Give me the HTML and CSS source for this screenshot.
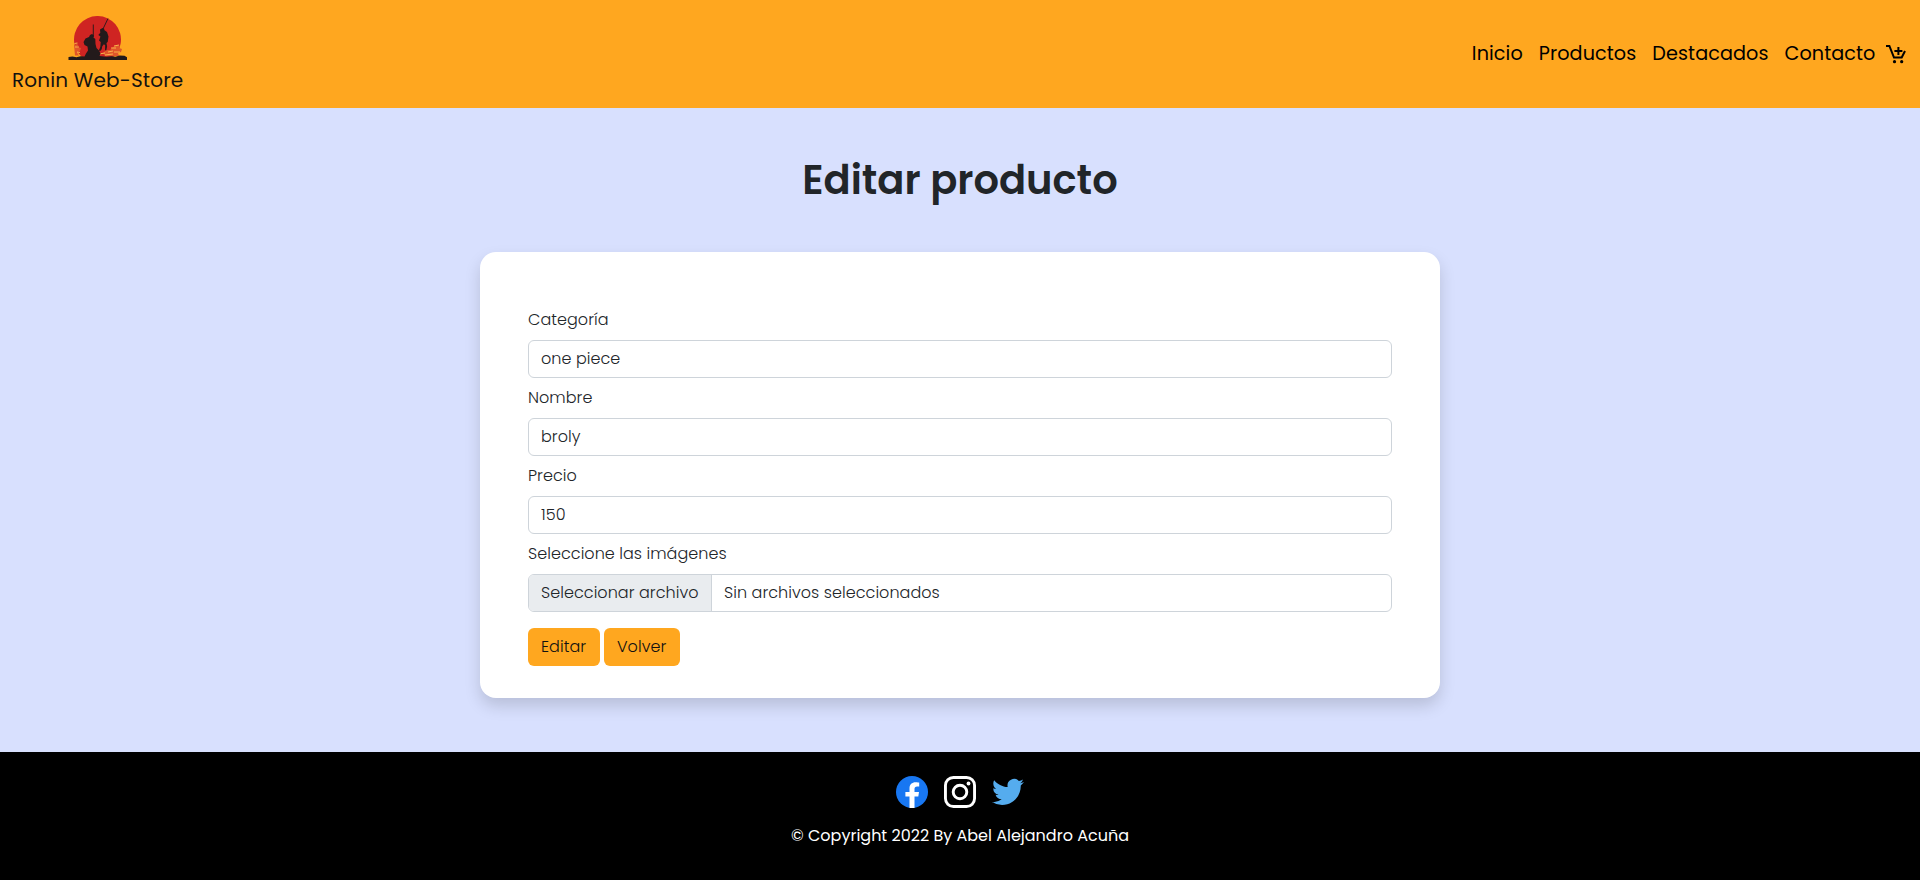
FILE: index.html
```html
<!DOCTYPE html>
<html lang="es">
<head>
<meta charset="utf-8">
<title>Editar producto</title>
<link rel="stylesheet" href="styles.css">
</head>
<body>
<header class="navbar">
  <a class="brand">
    <svg class="brand-logo" width="60" height="46" viewBox="0 0 60 46">
      <path d="M17.500 43.700A23.500 23.500 0 1 1 41.500 43.700z" fill="#cf2422"/>
      <path d="M6 29l3-1 1.500 1.500L9 31l4 1-1 3-3 1.500 2 3H7zM42 34l3-3 4-2 3 1-1 2 3 1-1 3-3 1 1 3H37l-2-3 3-3z" fill="#e0562a"/>
      <path d="M6.500 27.500l3-.5M7 31h4M9 36l3 .5M43 32h5M46 30l5-1M40 36l5-1M46 36h6M31 38l6-1M37 39l8-1" stroke="#f9b04a" stroke-width="1.100" fill="none"/>
      <path d="M.5 41l4-.5 4 .8 4-1 4 .2 1.500-3 2-3-.5-4-3-1.500-1-3 2-3.500 3.500-1.500 1-2 2-1 1.800 1.200-.3 2.300 1.800 1.500.2 5 1 4 2.500 2.500 1.500 3-1 2.500 7 .8 5-.6 4 .5 4-1.200 5 .3 2.500 1.500V44H.5z" fill="#231a1b"/>
      <path d="M25.300 8.500V21M40 2.500L34.500 14" stroke="#231a1b" stroke-width=".9"/>
      <path d="M32 13.500l2.500-1.500 1.500.5.500 1.800 2.500 1.700 1.500 4.500-.8 5.500-1.200 1 .6 3.500-.8 4-1.300-.2.200-5-1.300-1-1.600 2-.6 3-1.500 1.700-1.400-.4 1.500-3.600.4-5-1.700-1.500 1.500-4-2.200-1.500 2-2.300z" fill="#231a1b"/>
    </svg>
    <span class="brand-name">Ronin Web-Store</span>
  </a>
  <nav class="menu">
    <a class="menu-link">Inicio</a>
    <a class="menu-link">Productos</a>
    <a class="menu-link">Destacados</a>
    <a class="menu-link">Contacto</a>
    <svg class="cart" width="20" height="20" viewBox="0 0 20 20">
      <path d="M0 2h3.400L8 13.500h7.700L19 7M12.400 3v8M8.400 7h8" fill="none" stroke="#000" stroke-width="2"/>
      <circle cx="8.500" cy="17.700" r="1.600"/><circle cx="15.700" cy="17.700" r="1.600"/>
    </svg>
  </nav>
</header>
<main class="content">
  <h1 class="title">Editar producto</h1>
  <form class="card">
    <label class="label">Categoría</label>
    <div class="field">one piece</div>
    <label class="label">Nombre</label>
    <div class="field">broly</div>
    <label class="label">Precio</label>
    <div class="field">150</div>
    <label class="label">Seleccione las imágenes</label>
    <div class="field file">
      <div class="file-button">Seleccionar archivo</div>
      <div class="file-name">Sin archivos seleccionados</div>
    </div>
    <div class="actions">
      <a class="button edit">Editar</a>
      <a class="button back">Volver</a>
    </div>
  </form>
</main>
<footer class="footer">
  <div class="social">
    <svg width="32" height="32" viewBox="0 0 32 32"><circle cx="16" cy="16" r="16" fill="#1877f2"/><path d="M13.500 32V20.600H9.400V16h4.100v-3.500c0-4 2.400-6.200 6.100-6.200 1.700 0 3.600.3 3.600.3v3.900h-2c-2 0-2.700 1.200-2.700 2.500v3h4.500l-.7 4.600h-3.800V32z" fill="#fff"/></svg>
    <svg width="32" height="32" viewBox="0 0 32 32" fill="none" stroke="#fff" stroke-width="2.900"><rect x="1.450" y="1.450" width="29.100" height="29.100" rx="8"/><circle cx="16" cy="16" r="6.800"/><circle cx="24.500" cy="7.500" r="1.900" fill="#fff" stroke="none"/></svg>
    <svg width="32" height="32" viewBox="0 0 24 24"><path fill="#55acee" d="M23.953 4.570a10 10 0 01-2.825.775 4.958 4.958 0 002.163-2.723c-.951.555-2.005.959-3.127 1.184a4.920 4.920 0 00-8.384 4.482C7.690 8.095 4.067 6.130 1.640 3.162a4.822 4.822 0 00-.666 2.475c0 1.710.870 3.213 2.188 4.096a4.904 4.904 0 01-2.228-.616v.060a4.923 4.923 0 003.946 4.827 4.996 4.996 0 01-2.212.085 4.936 4.936 0 004.604 3.417 9.867 9.867 0 01-6.102 2.105c-.390 0-.779-.023-1.170-.067a13.995 13.995 0 007.557 2.209c9.053 0 13.998-7.496 13.998-13.985 0-.210 0-.420-.015-.630A9.935 9.935 0 0024 4.590z"/></svg>
  </div>
  <p class="copyright">© Copyright 2022 By Abel Alejandro Acuña</p>
</footer>
</body>
</html>
```
FILE: styles.css
```css
* { box-sizing: border-box; }
body {
  margin: 0;
  min-height: 880px;
  display: flex;
  flex-direction: column;
  background: #d8e0fe;
  color: #212529;
  font: 300 16px/24px Poppins, Inter, sans-serif;
}

.navbar {
  height: 108px;
  background: #ffa71f;
  display: flex;
  justify-content: space-between;
  align-items: center;
  padding: 0 14px 0 12px;
  color: #111;
}
.brand {
  display: flex;
  flex-direction: column;
  align-items: center;
  padding-top: 3px;
  font-weight: 400;
  font-size: 20px;
  line-height: 30px;
  letter-spacing: 0.16px;
}
.brand-logo { margin-bottom: 3px; }
.menu {
  display: flex;
  align-items: center;
  gap: 16px;
  color: #000;
  font-weight: 400;
  font-size: 19.2px;
  line-height: 30px;
  letter-spacing: 0.09px;
}
.menu-link { padding-bottom: 1px; }
.cart { margin-left: -5.5px; }

.content { flex: 1; display: flex; flex-direction: column; align-items: center; }
.title { font-weight: 600; font-size: 40px; line-height: 48px; margin: 48px 0; }
.card {
  width: 960px;
  height: 446px;
  border-radius: 16px;
  background: #fff;
  padding: 56px 48px 32px;
  box-shadow: 0 8px 16px rgba(0, 0, 0, .15);
  letter-spacing: 0.05px;
}
.label { display: block; margin-bottom: 8px; }
.field {
  height: 38px;
  border: 1px solid #ced4da;
  border-radius: 6px;
  padding: 6px 12px;
  margin-bottom: 8px;
}
.file { display: flex; padding: 0; overflow: hidden; }
.file-button {
  width: 183px;
  background: #e9ecef;
  border-right: 1px solid #ced4da;
  padding: 6px 12px;
  white-space: nowrap;
}
.file-name { padding: 6px 12px; }
.actions { display: flex; gap: 4px; margin-top: 16px; }
.button { height: 38px; border-radius: 6px; background: #ffa71f; color: #111; padding: 7px 13px; }
.edit { width: 72px; }
.back { width: 76px; }

.footer { height: 128px; background: #000; color: #fff; padding-top: 24px; font-weight: 400; }
.social { display: flex; gap: 16px; justify-content: center; }
.copyright { margin: 16px 0 0; text-align: center; }
```
